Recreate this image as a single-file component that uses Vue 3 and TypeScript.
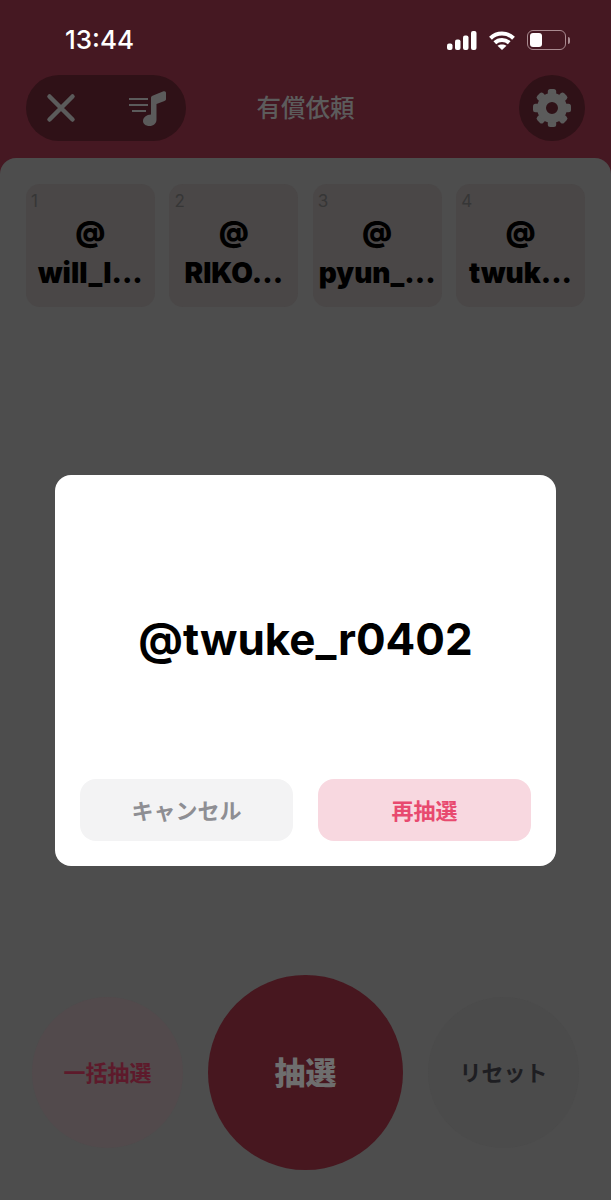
<script setup lang="ts">
const winners = [
  { no: 1, name: 'will_l...' },
  { no: 2, name: 'RIKO...' },
  { no: 3, name: 'pyun_...' },
  { no: 4, name: 'twuk...' }
]

const gearTeeth = [0, 45, 90, 135, 180, 225, 270, 315]
</script>

<template>
  <div class="screen">
    <div class="status">
      <span class="time">13:44</span>
      <div class="status-icons">
        <svg width="30" height="19" viewBox="0 0 30 19" fill="#fff">
          <rect x="0" y="12.500" width="5.500" height="6.500" rx="2" />
          <rect x="8" y="8.500" width="5.500" height="10.500" rx="2" />
          <rect x="16" y="4.500" width="5.500" height="14.500" rx="2" />
          <rect x="24" y="0" width="5.500" height="19" rx="2" />
        </svg>
        <svg width="26" height="19" viewBox="0 0 26 19" fill="none" stroke="#fff" stroke-width="4">
          <path d="M1.500 7.200C7.800 1 18.200 1 24.500 7.200" />
          <path d="M5.800 11.800C9.800 8 16.200 8 20.200 11.800" />
          <path d="M13 19 8.500 14.800C11 13 15 13 17.500 14.800Z" fill="#fff" stroke="none" />
        </svg>
        <div class="battery">
          <div class="battery-body"><div class="battery-level"></div></div>
          <div class="battery-cap"></div>
        </div>
      </div>
    </div>

    <div class="nav">
      <div class="pill">
        <svg width="30" height="30" viewBox="0 0 30 30" stroke="#5b5b5b" stroke-width="4.500" stroke-linecap="round">
          <path d="M3.500 3.500 26.500 26.500M26.500 3.500 3.500 26.500" />
        </svg>
        <svg width="37" height="35" viewBox="0 0 37 35" fill="#5b5b5b">
          <path d="M0 8H19M0 14H19M3 20H17" stroke="#5b5b5b" stroke-width="2" fill="none" />
          <path d="M22 7C22 5.500 22.500 5 24 4.500L34.500 0.300C36 -0.200 37 0.500 37 2V8C37 9 36.500 9.500 35.500 10L27.500 13V28.500C27.500 32.500 24.500 35 20.500 35 16.500 35 14 32.800 14 30 14 26.500 17.500 23.500 22 23.500Z" />
        </svg>
      </div>
      <span class="title">有償依頼</span>
      <div class="gear-btn">
        <svg width="38" height="38" viewBox="0 0 38 38" fill="#5b5b5b">
          <rect
            v-for="a in gearTeeth"
            :key="a"
            x="14.800"
            y="0"
            width="8.400"
            height="9"
            rx="2.500"
            :transform="`rotate(${a} 19 19)`"
          />
          <circle cx="19" cy="19" r="10.500" fill="none" stroke="#5b5b5b" stroke-width="9" />
        </svg>
      </div>
    </div>

    <main class="sheet">
      <div class="cards">
        <div v-for="w in winners" :key="w.no" class="card">
          <span class="card-no">{{ w.no }}</span>
          <span class="card-name">@<br />{{ w.name }}</span>
        </div>
      </div>

      <div class="actions">
        <button class="round round-side round-tint">一括抽選</button>
        <button class="round round-main">抽選</button>
        <button class="round round-side round-plain">リセット</button>
      </div>
    </main>

    <div class="overlay">
      <div class="dialog">
        <p class="handle">@twuke_r0402</p>
        <div class="dialog-btns">
          <button class="dlg-btn dlg-cancel">キャンセル</button>
          <button class="dlg-btn dlg-retry">再抽選</button>
        </div>
      </div>
    </div>
  </div>
</template>

<style scoped>
.screen {
  position: relative;
  height: 1200px;
  display: flex;
  flex-direction: column;
  background: #451822;
  font-family: Inter, "Noto Sans CJK JP", sans-serif;
  overflow: hidden;
}

.status {
  height: 75px;
  flex: none;
  display: flex;
  justify-content: space-between;
  align-items: center;
  padding: 5px 41px 0 65px;
  box-sizing: border-box;
}

.time {
  color: #fff;
  font-size: 26px;
  font-weight: 500;
  line-height: 30px;
}

.status-icons {
  display: flex;
  align-items: center;
  gap: 12px;
}

.battery {
  display: flex;
  align-items: center;
  gap: 2px;
}

.battery-body {
  width: 39px;
  height: 20px;
  box-sizing: border-box;
  border: 1.500px solid #a98a90;
  border-radius: 6px;
  padding: 2px;
}

.battery-level {
  width: 12px;
  height: 100%;
  background: #fff;
  border-radius: 3px;
}

.battery-cap {
  width: 2px;
  height: 7px;
  background: #a98a90;
  border-radius: 0 2px 2px 0;
}

.nav {
  height: 83px;
  flex: none;
  display: grid;
  grid-template-columns: 1fr auto 1fr;
  align-items: start;
  padding: 0 26px;
  box-sizing: border-box;
}

.pill {
  width: 160px;
  height: 66px;
  box-sizing: border-box;
  padding: 0 20px;
  display: flex;
  align-items: center;
  justify-content: space-between;
  background: #2f1117;
  border-radius: 33px;
}

.title {
  margin-top: 15px;
  color: #5c5c5c;
  font-size: 24.500px;
  font-weight: 500;
  line-height: 36px;
}

.gear-btn {
  width: 66px;
  height: 66px;
  justify-self: end;
  display: flex;
  align-items: center;
  justify-content: center;
  background: #2f1117;
  border-radius: 50%;
}

.sheet {
  flex: 1;
  display: flex;
  flex-direction: column;
  justify-content: space-between;
  background: #4d4d4d;
  border-radius: 16px 16px 0 0;
  padding: 26px 26px 30px;
}

.cards {
  display: grid;
  grid-template-columns: repeat(4, 1fr);
  gap: 14.500px;
}

.card {
  position: relative;
  height: 123px;
  box-sizing: border-box;
  padding-top: 27.500px;
  display: flex;
  justify-content: center;
  background: #4a4747;
  border-radius: 14px;
  text-align: center;
}

.card-no {
  position: absolute;
  top: 7px;
  left: 5px;
  color: #363636;
  font-size: 17px;
  line-height: 20px;
}

.card-name {
  color: #000;
  font-size: 28px;
  font-weight: 900;
  line-height: 41px;
  white-space: nowrap;
}

.actions {
  display: flex;
  justify-content: center;
  align-items: center;
  gap: 25px;
}

.round {
  border: none;
  border-radius: 50%;
  padding: 0 0 4px;
  font-family: inherit;
  font-weight: 700;
}

.round-side {
  width: 151px;
  height: 151px;
  font-size: 22px;
}

.round-tint {
  background: #524a4c;
  color: #5d1a2b;
}

.round-plain {
  background: #4b4b4b;
  color: #1e1e22;
}

.round-main {
  width: 195px;
  height: 195px;
  background: #47171f;
  color: #6e6e6e;
  font-size: 31px;
  font-weight: 900;
}

.overlay {
  position: absolute;
  inset: 0;
  display: flex;
  align-items: center;
  justify-content: center;
  padding-top: 141px;
  box-sizing: border-box;
}

.dialog {
  width: 501px;
  height: 391px;
  box-sizing: border-box;
  padding: 0 25px 25px;
  display: flex;
  flex-direction: column;
  background: #fff;
  border-radius: 16px;
}

.handle {
  flex: 1;
  margin: 0;
  padding-top: 24px;
  display: flex;
  align-items: center;
  justify-content: center;
  color: #000;
  font-size: 44px;
  font-weight: 700;
}

.dialog-btns {
  display: flex;
  gap: 25px;
}

.dlg-btn {
  flex: 1;
  height: 62px;
  border: none;
  border-radius: 16px;
  padding: 0 0 3px;
  font-family: inherit;
  font-size: 22px;
  font-weight: 700;
}

.dlg-cancel {
  background: #f3f3f4;
  color: #8e8e93;
}

.dlg-retry {
  background: #f8d8e0;
  color: #e84a6f;
}
</style>

<style>
body {
  background: #451822;
}
</style>
